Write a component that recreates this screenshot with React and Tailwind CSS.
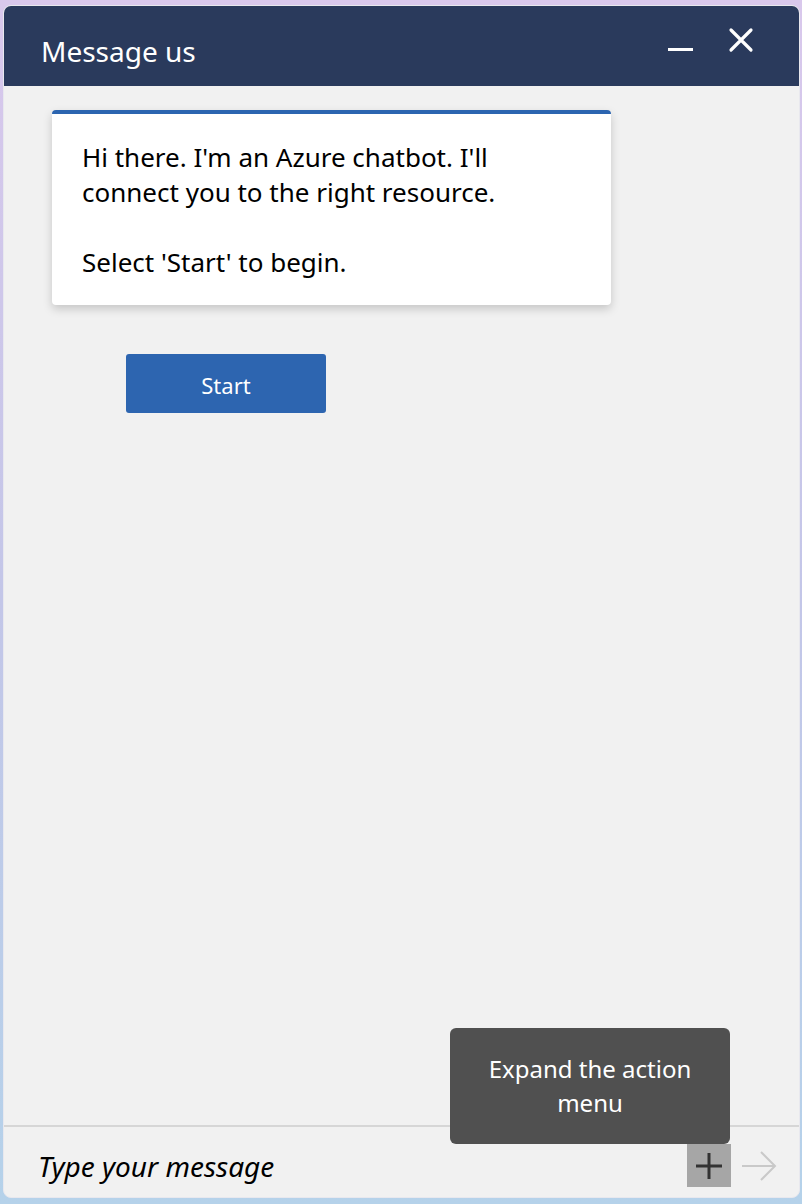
import React from "react";

const font = { fontFamily: "'Noto Sans', 'Open Sans', sans-serif" };

const App = () => {
  return (
    <div className="w-[802px] h-[1204px] bg-gradient-to-b from-[#d9c8ec] via-[#c3c6e8] to-[#b5d2ea] pt-[5px] pl-[3px]" style={font}>
      <div className="w-[797px] h-[1193px] rounded-lg border border-[#e8e8ee] overflow-hidden flex flex-col bg-[#f1f1f1]">
        {/* Header */}
        <div className="h-[80px] bg-[#2a3a5c] flex items-center justify-between pl-[37px] pr-[45px] shrink-0">
          <h1 className="text-[28px] text-white pt-[10px]">Message us</h1>
          <div className="flex items-center gap-[35px]">
            <div className="w-[25px] h-[3px] bg-white mt-[6px]" />
            <svg width="26" height="26" viewBox="0 0 26 26" className="-mt-[12px]">
              <path d="M3 3 L23 23 M23 3 L3 23" stroke="white" strokeWidth="3.2" strokeLinecap="round" />
            </svg>
          </div>
        </div>

        {/* Conversation */}
        <div className="flex-1 pl-[48px] pt-[24px]">
          <div className="w-[559px] bg-white rounded-[4px] border-t-4 border-[#2c65b0] shadow-[0_4px_10px_rgba(0,0,0,0.18)] pl-[30px] pr-[70px] pt-[26px] pb-[25px] text-[26px] leading-[35px] text-black">
            <p>Hi there. I'm an Azure chatbot. I'll connect you to the right resource.</p>
            <p className="mt-[35px]">Select 'Start' to begin.</p>
          </div>
          <button className="mt-[49px] ml-[74px] w-[200px] h-[59px] bg-[#2d65b0] rounded-[3px] text-white text-[22px] pt-[4px]">
            Start
          </button>
        </div>

        {/* Input bar */}
        <div className="relative h-[72px] border-t-2 border-[#d6d6d6] flex items-center pl-[34px] pr-[22px] shrink-0">
          <span className="flex-1 italic text-[28px] text-black pt-[8px]">Type your message</span>
          <div className="w-[44px] h-[43px] bg-[#a6a6a6] flex items-center justify-center mt-[7px]">
            <svg width="28" height="28" viewBox="0 0 28 28">
              <path d="M14 1 V27 M1 14 H27" stroke="#333" strokeWidth="3" />
            </svg>
          </div>
          <svg width="36" height="32" viewBox="0 0 36 32" className="ml-[10px] mt-[7px]">
            <path d="M1 16 H34 M20 2 L34 16 L20 30" stroke="#c9c9c9" strokeWidth="2" fill="none" />
          </svg>

          {/* Tooltip */}
          <div className="absolute left-[446px] -top-[99px] w-[280px] h-[116px] bg-[#505050] rounded-md flex items-center justify-center text-center text-white text-[24px] leading-[34px] px-4">
            Expand the action menu
          </div>
        </div>
      </div>
    </div>
  );
};

export default App;
